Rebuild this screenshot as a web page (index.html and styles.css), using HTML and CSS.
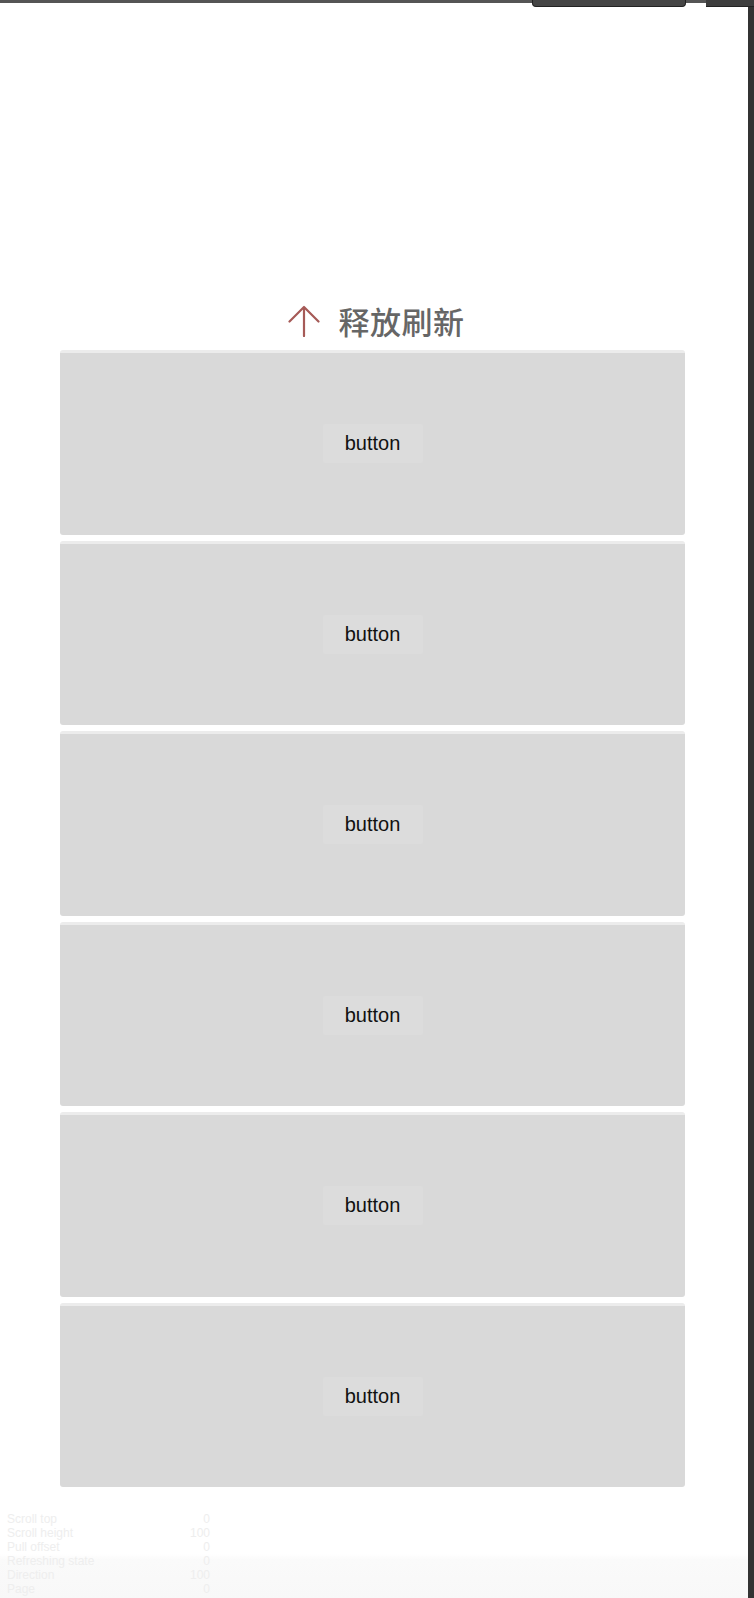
FILE: index.html
```html
<!DOCTYPE html>
<html lang="zh">
<head>
<meta charset="utf-8">
<title>释放刷新</title>
<link rel="stylesheet" href="styles.css">
</head>
<body>
<div class="topbar">
  <div class="tab"></div>
  <div class="tab-right"></div>
</div>
<div class="frame">
  <div class="page">
    <div class="refresh">
      <svg class="arrow" viewBox="0 0 32 32" width="32" height="32" aria-hidden="true">
        <path d="M16 2 V31 M1.5 16.5 L16 2 L30.5 16.5" fill="none" stroke="#a65a57" stroke-width="2.2" stroke-linecap="round" stroke-linejoin="round"/>
      </svg>
      <span class="refresh-text">释放刷新</span>
    </div>
    <div class="list">
      <div class="card"><div class="btn">button</div></div>
      <div class="card"><div class="btn">button</div></div>
      <div class="card"><div class="btn">button</div></div>
      <div class="card"><div class="btn">button</div></div>
      <div class="card"><div class="btn">button</div></div>
      <div class="card"><div class="btn">button</div></div>
    </div>
    <div class="debug">
      <div class="debug-row"><span>Scroll top</span><span>0</span></div>
      <div class="debug-row"><span>Scroll height</span><span>100</span></div>
      <div class="debug-row"><span>Pull offset</span><span>0</span></div>
      <div class="debug-row"><span>Refreshing state</span><span>0</span></div>
      <div class="debug-row"><span>Direction</span><span>100</span></div>
      <div class="debug-row"><span>Page</span><span>0</span></div>
    </div>
  </div>
  <div class="sidebar"></div>
</div>
</body>
</html>
```
FILE: styles.css
```css
html, body {
  margin: 0;
  padding: 0;
  background: #ffffff;
}
body {
  width: 754px;
  height: 1598px;
  overflow: hidden;
  font-family: "Liberation Sans", Arial, "Noto Sans CJK SC", sans-serif;
}
.topbar {
  height: 3px;
  background: #555555;
  display: flex;
  align-items: flex-start;
  position: relative;
  z-index: 2;
}
.tab {
  margin-left: 532px;
  width: 152px;
  height: 6px;
  background: #454545;
  border: 1px solid #222222;
  border-top: none;
  border-radius: 0 0 4px 4px;
}
.tab-right {
  margin-left: 20px;
  flex: 1;
  height: 7px;
  background: #3d3d3d;
  border-bottom: 1px solid #222222;
  box-sizing: border-box;
}
.frame {
  display: flex;
  height: 1595px;
}
.page {
  width: 748px;
  display: flex;
  flex-direction: column;
  background: #ffffff;
}
.sidebar {
  width: 6px;
  background: #333333;
}
.refresh {
  margin-top: 298px;
  height: 40px;
  display: flex;
  align-items: center;
  justify-content: center;
  gap: 19px;
  padding-left: 4px;
}
.arrow {
  display: block;
  flex: none;
}
.refresh-text {
  font-family: "Noto Sans CJK SC", "Noto Sans", sans-serif;
  font-size: 31px;
  font-weight: 500;
  color: #666666;
  line-height: 40px;
  letter-spacing: 0.5px;
}
.list {
  margin-top: 9px;
  margin-left: 60px;
  width: 625px;
  display: flex;
  flex-direction: column;
  gap: 6px;
}
.card {
  box-sizing: border-box;
  height: 184.5px;
  background: #d9d9d9;
  border-top: 3px solid #ececec;
  border-radius: 3px;
  display: flex;
  align-items: center;
  justify-content: center;
}
.btn {
  width: 100px;
  height: 39px;
  background: #dcdcdc;
  color: #111111;
  font-size: 20px;
  line-height: 39px;
  text-align: center;
  border-radius: 2px;
}
.debug {
  margin-top: 25px;
  flex: 1;
  padding-left: 7px;
  background: linear-gradient(#ffffff 0, #ffffff 42px, #fafafa 48px, #f8f8f8 100%);
  font-size: 12px;
  line-height: 14px;
  color: #eeeeee;
}
.debug-row {
  width: 203px;
  display: flex;
  justify-content: space-between;
}
```
